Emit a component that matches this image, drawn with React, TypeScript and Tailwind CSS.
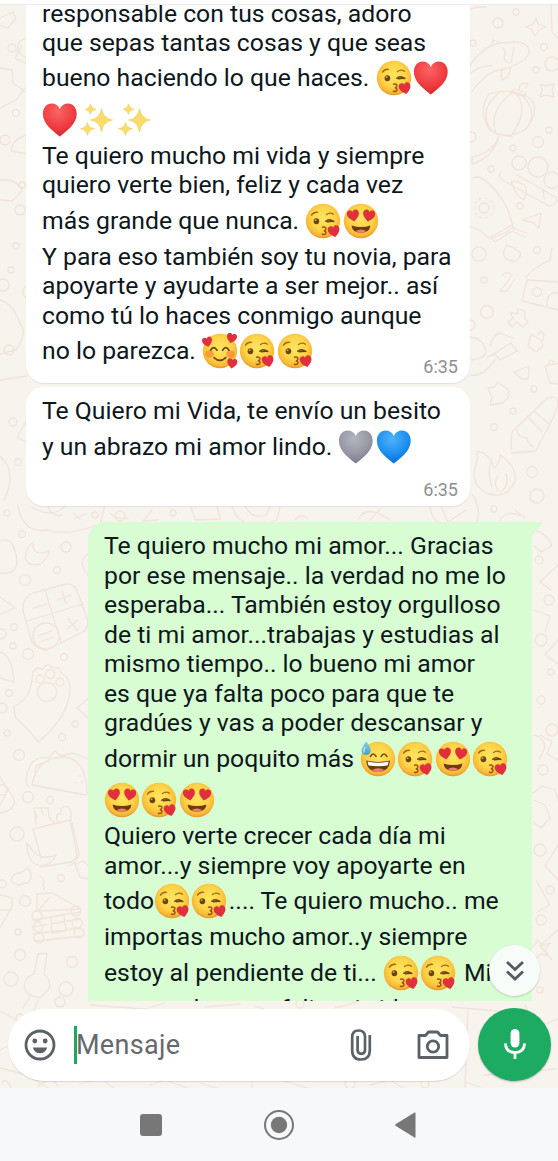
import type { ReactNode } from "react";

/* ---------- emoji ---------- */

const Heart = ({ x, y, s, fill = "#e0303c" }: { x: number; y: number; s: number; fill?: string }) => (
  <path
    transform={`translate(${x} ${y}) scale(${s})`}
    d="M0 9C-3 6.5-9 2.5-9-3C-9-6.5-6.8-8.5-4.4-8.5C-2.4-8.5-.8-7.5 0-5.6C.8-7.5 2.4-8.5 4.4-8.5C6.8-8.5 9-6.5 9-3C9 2.5 3 6.5 0 9Z"
    fill={fill}
  />
);

const Gradients = () => (
  <svg className="absolute h-0 w-0" aria-hidden="true">
    <defs>
      <radialGradient id="face" cx=".5" cy=".42" r=".58">
        <stop offset="0" stopColor="#ffe560" />
        <stop offset=".6" stopColor="#fdd347" />
        <stop offset=".88" stopColor="#f8b635" />
        <stop offset="1" stopColor="#e3952b" />
      </radialGradient>
      <radialGradient id="red" cx=".45" cy=".25" r=".75">
        <stop offset="0" stopColor="#fb6464" />
        <stop offset=".6" stopColor="#f03e42" />
        <stop offset="1" stopColor="#d22b32" />
      </radialGradient>
      <radialGradient id="gray" cx=".45" cy=".25" r=".75">
        <stop offset="0" stopColor="#b3b5c0" />
        <stop offset=".6" stopColor="#9698a5" />
        <stop offset="1" stopColor="#7a7c8b" />
      </radialGradient>
      <radialGradient id="blue" cx=".45" cy=".25" r=".75">
        <stop offset="0" stopColor="#4fb2fb" />
        <stop offset=".6" stopColor="#1e90f0" />
        <stop offset="1" stopColor="#0b6fd0" />
      </radialGradient>
      <linearGradient id="drop" x1="0" y1="0" x2="0" y2="1">
        <stop offset="0" stopColor="#8fd0e8" />
        <stop offset="1" stopColor="#3ba4d4" />
      </linearGradient>
    </defs>
  </svg>
);

const Emoji = ({ children }: { children: ReactNode }) => (
  <svg viewBox="0 0 37.4 36" className="h-9 w-[37.4px] shrink-0">
    {children}
  </svg>
);

const Face = () => <circle cx="18" cy="18" r="17.2" fill="url(#face)" />;

const Kiss = () => (
  <Emoji>
    <Face />
    <g fill="none" stroke="#6b4413" strokeLinecap="round">
      <path d="M6.5 12.2Q8.5 8.8 12.5 9.3" strokeWidth="1.3" stroke="#9a6a1a" />
      <path d="M21.5 11.5Q25 8.8 28.5 11.2" strokeWidth="1.3" stroke="#9a6a1a" />
      <path d="M20.8 18.2Q24 15.2 28.8 18.4M22.5 18.8Q25.5 18.2 28.8 18.4" strokeWidth="1.5" />
      <path d="M17.6 24.2Q21.4 23.6 20.8 26.2Q20.4 27.6 18.8 27.7Q21.3 28 20.9 30.2Q20.3 32 17.4 31.3" strokeWidth="1.5" stroke="#9c4f12" />
    </g>
    <ellipse cx="11.4" cy="18.2" rx="2.8" ry="3" fill="#6b4413" />
    <circle cx="10.6" cy="17.2" r=".9" fill="#d9b05a" />
    <g transform="rotate(-12 29 28.5)">
      <Heart x={29} y={28.3} s={0.66} />
    </g>
  </Emoji>
);

const HeartEyes = () => (
  <Emoji>
    <Face />
    <g transform="rotate(-10 10 13)">
      <Heart x={10.3} y={12.6} s={0.67} />
    </g>
    <g transform="rotate(10 26 13)">
      <Heart x={25.8} y={12.6} s={0.67} />
    </g>
    <path d="M8.5 22.5Q18 25.5 27.5 22.5Q26.5 29.8 18 29.8Q9.5 29.8 8.5 22.5Z" fill="#6e3a12" />
    <path d="M12.8 28Q18 24.8 23.2 28Q21 29.8 18 29.8Q15 29.8 12.8 28Z" fill="#ee7f72" />
  </Emoji>
);

const Adoring = () => (
  <Emoji>
    <Face />
    <ellipse cx="7.5" cy="21" rx="4.3" ry="3.4" fill="#f98a35" opacity=".75" />
    <ellipse cx="28.5" cy="21" rx="4.3" ry="3.4" fill="#f98a35" opacity=".75" />
    <g fill="none" stroke="#6b4413" strokeWidth="1.7" strokeLinecap="round">
      <path d="M8.5 17.2Q11.8 12.2 15 17.2M20.6 17.2Q23.8 12.2 27 17.2" />
      <path d="M12 24.6Q17.8 30.2 23.8 24.6" />
    </g>
    <g transform="rotate(-14 5 9)">
      <Heart x={5.4} y={9} s={0.56} />
    </g>
    <g transform="rotate(14 30 5)">
      <Heart x={29.6} y={5.2} s={0.56} />
    </g>
    <g transform="rotate(8 30 30)">
      <Heart x={30.2} y={30.4} s={0.56} />
    </g>
  </Emoji>
);

const Sweat = () => (
  <Emoji>
    <Face />
    <path d="M10.5 15.4Q13.2 10.6 16 15.4M21.2 15.4Q24 10.6 26.8 15.4" fill="none" stroke="#7a4a12" strokeWidth="1.7" strokeLinecap="round" />
    <path d="M6.2 19.5Q18 22.4 30 19.5Q29.5 31 18 31Q6.8 31 6.2 19.5Z" fill="#6e3a12" />
    <path d="M7.6 20.6Q18 23 28.6 20.6Q28.4 23.2 27.4 24.6Q18 26 8.8 24.6Q7.7 22.8 7.6 20.6Z" fill="#fff" />
    <path d="M11.8 29Q18 25.6 24.4 29Q21.6 31 18 31Q14.6 31 11.8 29Z" fill="#ee7f72" />
    <path d="M6.3 .3Q11.2 7.2 10.6 10.4Q9.7 14 6 13.9Q2 13.6 1.6 10Q1.6 6.6 6.3 .3Z" fill="url(#drop)" />
    <path d="M5 6.5Q3.2 9.3 4 11" fill="none" stroke="#d8f2fb" strokeWidth="1.2" strokeLinecap="round" />
  </Emoji>
);

const BigHeart = ({ fill }: { fill: string }) => (
  <Emoji>
    <Heart x={17.8} y={17.6} s={1.88} fill={fill} />
  </Emoji>
);
const Red = () => <BigHeart fill="url(#red)" />;
const Gray = () => <BigHeart fill="url(#gray)" />;
const Blue = () => <BigHeart fill="url(#blue)" />;

const Sparkles = () => (
  <Emoji>
    <g fill="#f8dc6c" stroke="#edc44c" strokeWidth=".5" transform="translate(1 0)">
      <path d="M21.5 6.5Q23 16.5 32.500 18Q23 19.5 21.5 30Q20 19.5 10.500 18Q20 16.500 21.500 6.500Z" />
      <path d="M10.500 2Q11.300 6.500 16 7.300Q11.300 8.100 10.500 12.500Q9.700 8.100 5 7.300Q9.700 6.500 10.500 2Z" />
      <path d="M7.500 20.500Q8.500 25.700 14.500 26.700Q8.500 27.700 7.500 33.500Q6.500 27.700 .500 26.700Q6.500 25.700 7.500 20.500Z" />
    </g>
  </Emoji>
);

/* ---------- wallpaper ---------- */

const dots: [number, number, number][] = [
  [498, 23, 5], [516, 12, 3], [552, 64, 7], [544, 47, 3.500], [473, 43, 3], [536, 70, 3], [549, 130, 3], [538, 142, 5.500],
  [513, 148, 3], [491, 169, 3], [519, 163, 7], [538, 167, 10], [552, 180, 8], [520, 206, 3], [479, 254, 7], [537, 250, 3.500],
  [484, 280, 3], [487, 312, 6.500], [534, 389, 3], [513, 411, 3], [494, 427, 3.500], [532, 472, 5.500], [537, 496, 7], [494, 509, 3],
  [471, 137, 5], [470, 325, 5], [7, 513, 3], [22, 534, 3.500], [66, 547, 5], [57, 570, 3.500], [25, 580, 5.500], [14, 627, 3.500],
  [13, 646, 3], [28, 654, 5.500], [64, 657, 3.500], [9, 693, 3.500], [75, 724, 3], [62, 737, 3.500], [19, 755, 5.500], [7, 733, 3],
  [28, 797, 5.500], [50, 800, 3.500], [17, 834, 7], [61, 878, 3.500], [25, 901, 5.500], [18, 932, 3], [20, 955, 5.500], [72, 962, 5.500],
  [11, 979, 7], [66, 989, 7], [2, 708, 5], [1, 634, 5], [2, 884, 4], [2, 790, 5], [12, 48, 4], [16, 113, 3.500], [5, 140, 5],
  [20, 210, 5], [16, 246, 3], [11, 270, 3], [22, 185, 3], [3, 285, 6], [18, 462, 3.500], [13, 422, 4], [9, 350, 5], [543, 770, 5],
  [541, 700, 4], [552, 730, 6], [539, 560, 4], [549, 600, 5], [541, 640, 6], [551, 672, 3], [540, 850, 6], [550, 890, 4], [541, 920, 5],
  [95, 515, 3], [173, 513, 3], [120, 516, 5], [20, 1018, 4], [60, 1002, 5], [300, 1004, 4], [425, 1084, 4], [350, 1084, 5], [540, 990, 3],
];

const Wallpaper = () => (
  <svg viewBox="0 0 558 1083" className="absolute inset-0 h-full w-full" aria-hidden="true">
    <g fill="none" stroke="#f0e3d9" strokeWidth="1.300" strokeLinejoin="round" strokeLinecap="round" transform="translate(0 -5)">
      {dots.map(([x, y, r], i) => (
        <circle key={i} cx={x} cy={y} r={r} />
      ))}
      <path d="M536 18L538 24L546 27L539 30L535 36L531 29L526 27L533 24ZM541 84L545 86L554 84L552 90L554 97L546 95L540 97L542 90ZM551 0L552 32L558 38M470 9Q480 6 486 7" />
      <path d="M470 66Q480 48 500 43L515 42Q531 43 529 54Q524 62 508 68Q490 71 484 78Q478 84 472 91M492 44L493 40L501 43M503 48Q507 51 504 58Q508 66 511 62Q513 55 514 47M503 69Q500 75 502 80Q509 79 511 67M471 73Q480 65 492 66" />
      <path d="M489 94Q477 112 490 130Q506 141 526 129Q540 112 531 99Q512 87 489 94M512 93Q488 110 496 134M515 93Q531 108 511 136M521 94Q540 113 525 130M499 93Q477 110 492 131M512 92L524 97L526 93L514 89ZM519 90Q519 83 526 83Q530 84 525 88M498 134L512 137M499 136Q493 153 472 157L472 164Q493 157 498 139" />
      <path d="M473 178Q480 174 491 186Q508 202 513 227L505 233L490 239Q481 230 470 226M491 237L512 225L514 230L495 242ZM514 228L527 233M514 232L525 237M511 182Q517 198 524 200Q529 185 522 184Q516 180 511 182M501 172Q497 177 504 181L549 206Q556 206 557 198L517 175M543 189L544 198" />
      <circle cx="484" cy="208" r="5" />
      <circle cx="484" cy="208" r="10" strokeDasharray="2 4" />
      <path d="M522 220L541 213L539 228L534 223ZM504 250L507 245L513 248L520 252Q522 259 514 261Q502 261 504 250M502 275Q507 270 512 275L503 288L500 291L507 291L514 280M526 278Q530 270 550 260L552 248M558 282L527 280L522 301L558 310M547 306Q546 291 558 293" />
      <circle cx="537" cy="292" r="4.500" />
      <path d="M510 312L517 314L518 309L525 311L525 318L528 322L523 327L517 322L512 327L508 322L513 318ZM490 346Q493 334 500 333L513 338M488 357L511 343L517 351L500 360L495 354ZM470 337Q484 338 486 352Q485 359 471 360M470 375Q482 378 495 360M531 334L541 340L543 346L536 352L528 346ZM538 335Q539 330 544 334L543 340M514 372L529 366L528 379L522 379ZM545 366L558 363M545 366L550 383L558 384M549 363Q549 358 554 362" />
      <path d="M488 388L495 387L497 382L503 386L509 390Q510 399 502 403L490 405L492 398ZM511 450L512 432L546 399Q557 393 558 405L555 414L536 451L511 453M517 430Q518 438 527 438Q529 445 534 447M527 416L542 432M534 411L549 424" />
      <path d="M477 451Q491 454 494 468Q500 463 500 455Q517 466 515 481Q508 499 489 494Q469 486 476 464Q478 461 477 451M491 463Q487 474 492 487M498 476Q493 482 498 491M506 474Q510 485 500 493M472 494Q481 506 477 522M500 520Q507 509 521 516M515 510L525 518" />
      <path d="M0 18L13 12L16 18L8 28L0 25M27 38Q17 40 17 51L27 59M22 45L15 58L27 64M0 68L12 70L13 83L27 93M0 108L16 100L25 88M27 135Q12 139 11 151L27 154M0 180Q17 178 22 191L12 201L0 200M27 285Q18 292 27 298M0 300Q14 304 20 324Q28 332 16 350L0 354M0 380L27 376M27 420L17 437L27 443M0 456Q18 472 4 500" />
      <path d="M18 505Q22 534 48 530Q66 537 100 524L105 505M32 507Q52 520 66 505M48 504A11 11 0 0 0 62 515M74 519L86 514M73 513L80 519M0 541Q14 535 17 561Q17 575 0 573M33 542Q26 547 25 558Q29 567 40 564Q48 559 49 551Q32 558 33 542M88 554Q77 562 88 575M0 597L15 608L0 614M0 652Q12 655 14 682L0 678" />
      <path d="M33 593L66 584Q74 583 77 591L88 621Q88 631 79 634L47 650Q34 649 31 639L23 611Q22 597 33 593M45 590L61 642M27 621L83 604M33 608L47 604M58 600L71 595M62 591L66 604M67 629L78 620M68 619L77 630M38 636L52 631M40 642L54 637" />
      <circle cx="46" cy="636" r="13" />
      <path d="M33 672Q38 665 42 670Q48 661 53 668Q60 666 62 674Q70 677 70 689Q69 717 38 742Q28 728 15 717L14 706Q31 701 33 672" />
      <circle cx="47" cy="692" r="9.500" />
      <circle cx="40" cy="679" r="4" />
      <circle cx="50" cy="674" r="4.500" />
      <circle cx="60" cy="682" r="4" />
      <path d="M88 699L77 708L88 718M29 786Q22 783 31 764Q37 756 49 758L55 751L61 756L73 753L88 759M32 785L86 795M32 785Q37 757 64 757Q87 759 87 794M36 776Q32 765 44 763M79 776h1M75 783h1M82 782h1M0 777L13 797Q18 810 0 813M0 805L9 788" />
      <path d="M33 829L70 820L77 855Q75 863 65 863L40 867M33 829L41 858M36 824L34 808L48 808L49 817L55 824M35 812L37 818M41 808L43 815M71 820L71 811Q67 803 61 809Q62 814 57 815Q55 820 60 823M72 823L79 853Q78 863 68 866M27 843Q27 864 41 866Q53 864 56 855Q39 862 30 847ZM11 881Q12 873 20 873L28 868Q34 875 29 882L18 885ZM75 864L83 861L88 865M75 864L80 877L88 879" />
      <path d="M0 895L12 898Q13 907 9 912L0 928M0 910L11 910M40 876Q46 880 43 885L44 889M37 911L37 894L52 893L81 909L38 911L50 897M33 920L80 912M32 927L80 919M33 934L80 928M36 941L82 936M51 917L64 915L66 931L52 933Z" />
      <circle cx="37" cy="916" r="5" />
      <circle cx="38" cy="927" r="5" />
      <circle cx="39" cy="938" r="5" />
      <circle cx="76" cy="911" r="5" />
      <circle cx="77" cy="923" r="5" />
      <circle cx="79" cy="933" r="5" />
      <path d="M38 954L47 953L44 974Q52 981 49 989L41 997Q28 998 24 987Q25 977 34 974ZM31 995L23 1008M38 1000L33 1012" />
      <path d="M533 530Q548 533 552 546L541 552L534 546M558 565L540 582L551 590M534 610L550 616L545 632M558 640L545 655L558 664M540 735L552 742L547 754L558 760M534 735Q545 738 545 748L539 759M533 793L542 786L555 790L558 800M534 800L545 805L550 818L541 828L533 822M558 845L545 866L558 880M536 880L550 905L537 912M558 930L540 946L552 960M533 947L538 940L542 946L550 943L545 950L549 956L541 954L535 960" />
      <path d="M190 506L196 520L220 519L217 506M232 506Q240 534 277 520L280 506M245 506Q252 520 267 515L270 506M358 520Q363 508 378 513L390 520M370 520L380 509M430 506Q432 528 453 522M441 506L448 522L466 510M295 520Q302 512 308 519M110 513Q116 520 128 518M152 510L143 521L158 520" />
      <path d="M0 1011L18 1021L10 1045L0 1050M0 1068L27 1075L50 1089M90 1005L145 1009L165 1003M205 1007L240 1004M254 1006L268 1010M335 1008L360 1001M452 1007L498 1011M468 1010L465 1089M484 1075L555 1069M80 1084L100 1078L115 1089M150 1085L165 1080L190 1089M200 1083L220 1089M252 1080V1089M284 1081L310 1089M370 1085L390 1080L405 1089M465 1082L480 1087M525 1005L540 1042M545 1024L558 1019M2 1082Q6 1077 12 1089M38 1086Q52 1075 58 1086" />
    </g>
  </svg>
);

/* ---------- messages ---------- */

const Line = ({ className, children }: { className: string; children: ReactNode }) => (
  <div className={`flex shrink-0 items-end whitespace-nowrap ${className}`}>{children}</div>
);
const T = ({ children }: { children: ReactNode }) => (
  <span className="block h-[30px] whitespace-pre leading-[30px]">{children}</span>
);
const Row = ({ children }: { children: ReactNode }) => (
  <span className="flex h-[30px] items-center">{children}</span>
);

const h = "h-[29.5px]";
const e = "h-[35.5px]";

export default function App() {
  return (
    <div className="relative flex h-[1161px] w-[558px] flex-col overflow-hidden bg-white font-['Roboto',sans-serif] text-[24.75px] text-[#0d171c]">
      <Gradients />
      <div className="h-[5px] shrink-0 border-b border-[#ececec] bg-white" />
      <div className="relative h-[1083px] shrink-0 overflow-hidden bg-[#f7f4ee]">
        <Wallpaper />
        <main className="relative flex h-[996px] flex-col overflow-hidden">
          <section className="ml-[26px] flex h-[378px] w-[444px] shrink-0 flex-col rounded-b-[18px] bg-white pl-4 shadow-[0_1px_1px_rgba(0,0,0,0.08)]">
            <Line className="-mt-[6px] h-[29.5px]"><T>responsable con tus cosas, adoro</T></Line>
            <Line className={h}><T>que sepas tantas cosas y que seas</T></Line>
            <Line className="h-[35px]"><T>bueno haciendo lo que haces. </T><Row><Kiss /><Red /></Row></Line>
            <Line className="h-[41.5px]"><Row><Red /><Sparkles /><Sparkles /></Row></Line>
            <Line className="h-9"><T>Te quiero mucho mi vida y siempre</T></Line>
            <Line className={h}><T>quiero verte bien, feliz y cada vez</T></Line>
            <Line className={e}><T>más grande que nunca. </T><Row><Kiss /><HeartEyes /></Row></Line>
            <Line className="h-9"><T>Y para eso también soy tu novia, para</T></Line>
            <Line className={h}><T>apoyarte y ayudarte a ser mejor.. así</T></Line>
            <Line className={h}><T>como tú lo haces conmigo aunque</T></Line>
            <Line className={e}><T>no lo parezca. </T><Row><Adoring /><Kiss /><Kiss /></Row></Line>
            <time className="-mt-[11px] mr-3 self-end text-[18px] leading-6 text-[#8e8f91]">6:35</time>
          </section>
          <section className="mt-1 ml-[26px] flex h-[119px] w-[444px] shrink-0 flex-col rounded-[18px] bg-white pt-[9.5px] pl-4 shadow-[0_1px_1px_rgba(0,0,0,0.08)]">
            <Line className={h}><T>Te Quiero mi Vida, te envío un besito</T></Line>
            <Line className={e}><T>y un abrazo mi amor lindo. </T><Row><Gray /><Blue /></Row></Line>
            <time className="mt-[16.5px] mr-3 self-end text-[18px] leading-6 text-[#8e8f91]">6:35</time>
          </section>
          <section className="relative mt-4 ml-[88px] flex h-[520px] w-[444px] shrink-0 flex-col rounded-tl-[18px] bg-[#d8fdd2] pt-[9.5px] pl-4">
            <svg viewBox="0 0 12 14" className="absolute top-0 -right-[11px] h-3.5 w-3 fill-[#d8fdd2]">
              <path d="M0 0H11Q12 1 11 2L1 13V14H0Z" />
            </svg>
            <Line className={h}><T>Te quiero mucho mi amor... Gracias</T></Line>
            <Line className={h}><T>por ese mensaje.. la verdad no me lo</T></Line>
            <Line className={h}><T>esperaba... También estoy orgulloso</T></Line>
            <Line className={h}><T>de ti mi amor...trabajas y estudias al</T></Line>
            <Line className={h}><T>mismo tiempo.. lo bueno mi amor</T></Line>
            <Line className={h}><T>es que ya falta poco para que te</T></Line>
            <Line className={h}><T>gradúes y vas a poder descansar y</T></Line>
            <Line className="h-9"><T>dormir un poquito más </T><Row><Sweat /><Kiss /><HeartEyes /><Kiss /></Row></Line>
            <Line className="h-[41px]"><Row><HeartEyes /><Kiss /><HeartEyes /></Row></Line>
            <Line className="h-9"><T>Quiero verte crecer cada día mi</T></Line>
            <Line className={h}><T>amor...y siempre voy apoyarte en</T></Line>
            <Line className={e}><T>todo</T><Row><Kiss /><Kiss /></Row><T>.... Te quiero mucho.. me</T></Line>
            <Line className="h-9"><T>importas mucho amor..y siempre</T></Line>
            <Line className={e}><T>estoy al pendiente de ti... </T><Row><Kiss /><Kiss /></Row><T> Mi</T></Line>
            <Line className="h-[36.5px]"><T>meta solo verte feliz mi vida</T></Line>
          </section>
          <button aria-label="Ir al final" className="absolute top-[940px] left-[489px] flex h-[51px] w-[51px] items-center justify-center rounded-full bg-[#f8fcf8] shadow-[0_1px_2px_rgba(0,0,0,0.18)]">
            <svg viewBox="0 0 20 22" className="h-[22px] w-5 fill-none stroke-[#545b60] stroke-[2.800]">
              <path d="M2 2L10 9.500L18 2M2 11.500L10 19L18 11.500" />
            </svg>
          </button>
        </main>
        <div className="relative flex items-center gap-2 pt-[7px] pl-2">
          <div className="flex h-[72px] w-[462px] items-center rounded-full bg-white pl-4 shadow-[0_1px_1px_rgba(0,0,0,0.12)]">
            <svg viewBox="0 0 32 32" className="h-8 w-8 fill-none stroke-[#5b6166]">
              <circle cx="16" cy="16" r="14" strokeWidth="2.800" />
              <circle cx="10.800" cy="12" r="2.400" className="fill-[#5b6166] stroke-none" />
              <circle cx="21.200" cy="12" r="2.400" className="fill-[#5b6166] stroke-none" />
              <path d="M8.800 18.500H23.200Q21.500 24.300 16 24.300Q10.500 24.300 8.800 18.500Z" className="fill-[#5b6166] stroke-none" />
            </svg>
            <span className="ml-[18px] h-[38px] w-[3px] bg-[#1fa863]" />
            <span className="-ml-[1px] grow text-[27px] leading-9 tracking-[0.3px] text-[#65696d]">Mensaje</span>
            <svg viewBox="0 0 22 32" className="h-8 w-[22px] fill-none stroke-[#5b6166] stroke-[2.700]">
              <path d="M19.800 6V21.500Q19.800 30.500 11 30.500Q2.200 30.500 2.200 21.500V8Q2.200 1.500 8.600 1.500Q15 1.500 15 8V21Q15 24.800 11.200 24.800Q7.600 24.800 7.600 21V7" />
            </svg>
            <svg viewBox="0 0 32 30" className="mr-[21px] ml-[45px] h-[30px] w-8 fill-none stroke-[#5b6166] stroke-[2.800]" strokeLinejoin="round">
              <path d="M2 5.500H8.500L11.500 2H20.500L23.500 5.500H30V27.500H2Z" />
              <circle cx="16" cy="16.500" r="5.700" />
            </svg>
          </div>
          <button aria-label="Grabar" className="flex h-[73px] w-[73px] items-center justify-center rounded-full bg-[#1dab61] shadow-[0_1px_2px_rgba(0,0,0,0.25)]">
            <svg viewBox="0 0 22 30" className="-mt-0.5 h-[30px] w-[22px]">
              <rect x="6.600" y="0" width="8.800" height="18.500" rx="4.400" fill="#fff" />
              <path d="M1.400 14.300Q1.900 23.500 11 23.500Q20.100 23.500 20.600 14.300M11 23.500V30" fill="none" stroke="#fff" strokeWidth="2.800" />
            </svg>
          </button>
        </div>
      </div>
      <nav className="flex h-[73px] shrink-0 items-center bg-[#f6f8fa] pl-[140px]">
        <svg viewBox="0 0 22 22" className="h-[22px] w-[22px] fill-[#777]">
          <rect width="22" height="22" rx="3" />
        </svg>
        <svg viewBox="0 0 30 30" className="ml-[102px] h-[30px] w-[30px]">
          <circle cx="15" cy="15" r="14" fill="none" stroke="#777" strokeWidth="2" />
          <circle cx="15" cy="15" r="8.200" fill="#777" />
        </svg>
        <svg viewBox="0 0 21 26" className="ml-[101px] h-[26px] w-[21px] fill-[#777]">
          <path d="M20.500 1V25Q20.500 26 19.500 25.400L.500 13.700Q0 13 .500 12.300L19.500 .6Q20.500 0 20.500 1Z" />
        </svg>
      </nav>
    </div>
  );
}
